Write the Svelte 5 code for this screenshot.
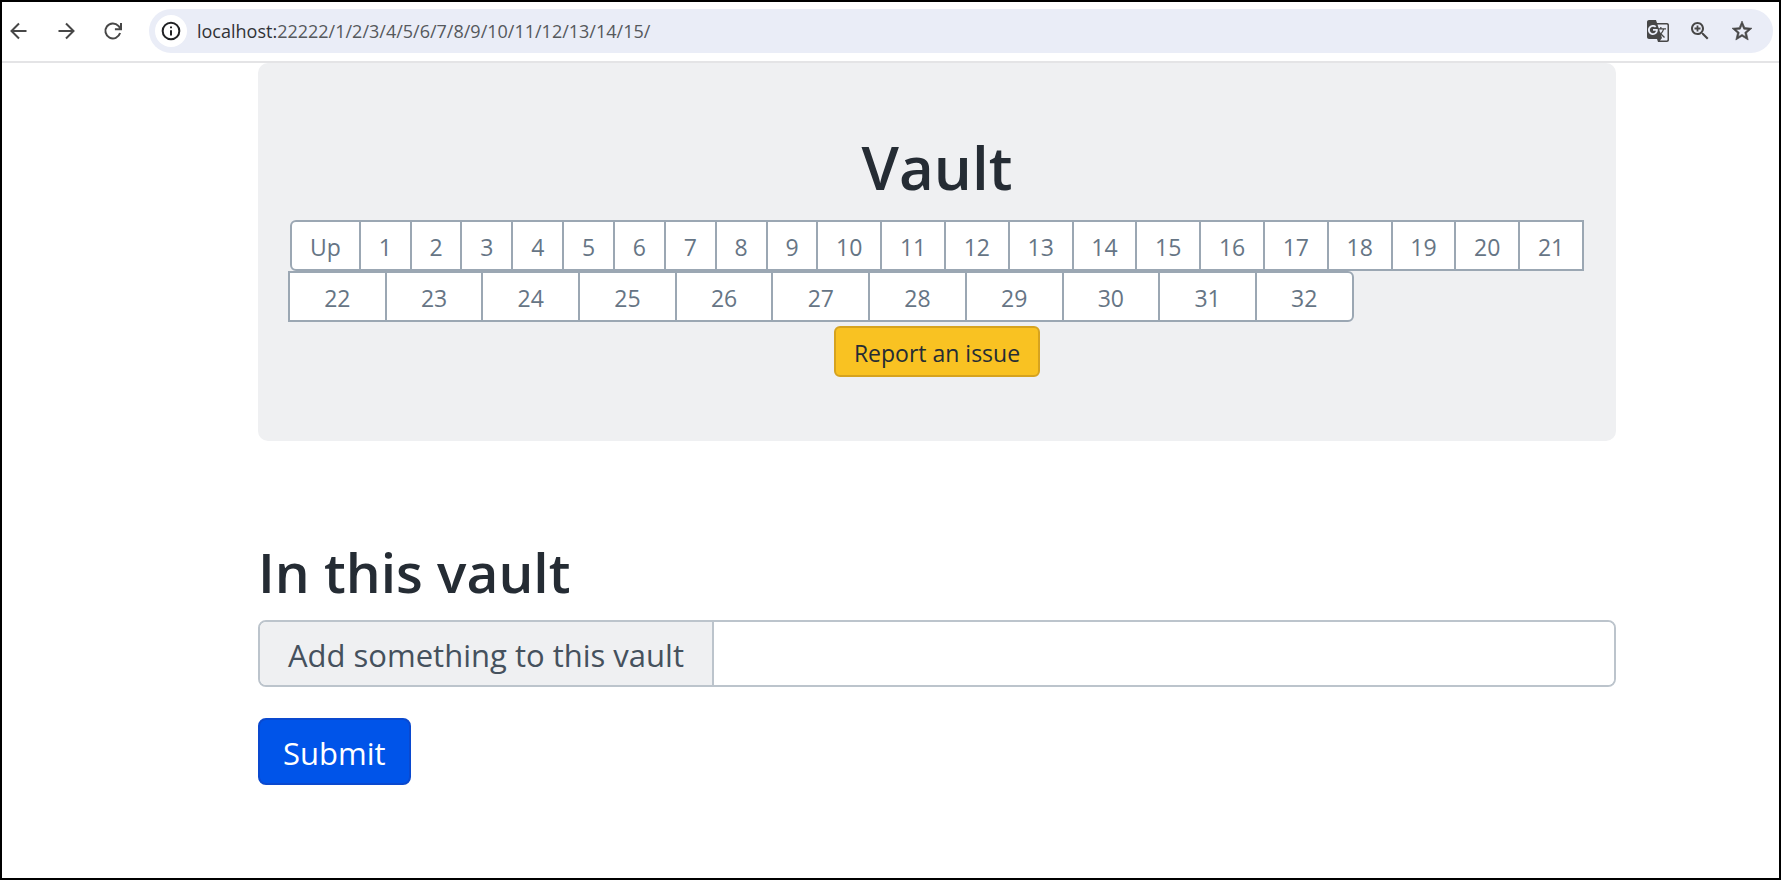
<script>
  const firstRow = Array.from({ length: 21 }, (_, i) => i + 1);
  const secondRow = Array.from({ length: 11 }, (_, i) => i + 22);
  let item = $state('');
</script>

<div class="window">
  <header class="toolbar">
    <nav class="history" aria-label="History">
      <button aria-label="Back"><svg viewBox="0 0 24 24"><path d="M21 12H4.500M12 3l-9 9 9 9" /></svg></button>
      <button aria-label="Forward"><svg viewBox="0 0 24 24"><path d="M3 12h16.500M12 3l9 9-9 9" /></svg></button>
      <button aria-label="Reload"><svg viewBox="0 0 24 24"><path d="M20.500 14.500A9 9 0 1 1 18.500 5.800L21 9M21.600 2.500v7.300h-7.300" /></svg></button>
    </nav>
    <div class="address">
      <button class="info" aria-label="Site information">
        <svg viewBox="0 0 24 24"><circle cx="12" cy="12" r="10" /><path d="M12 11v6.500M12 6.500v2.300" /></svg>
      </button>
      <span class="url"><b>localhost:</b>22222/1/2/3/4/5/6/7/8/9/10/11/12/13/14/15/</span>
      <div class="actions">
        <button aria-label="Translate this page">
          <svg viewBox="0 0 24 24"><path d="M21 4H11l-1-3H3c-1.100 0-2 .9-2 2v15c0 1.100.9 2 2 2h8l1 3h9c1.100 0 2-.9 2-2V6c0-1.100-.9-2-2-2zM7 16c-2.760 0-5-2.240-5-5s2.240-5 5-5c1.350 0 2.480.5 3.350 1.300L9.030 8.570c-.38-.36-1.040-.78-2.030-.78-1.740 0-3.150 1.440-3.150 3.210S5.260 14.210 7 14.210c2.010 0 2.840-1.440 2.920-2.410H7v-1.710h4.680c.07.31.12.61.12 1.020C11.800 13.970 9.890 16 7 16zm6.170-5.420h3.700c-.43 1.250-1.110 2.430-2.050 3.470-.31-.35-.6-.72-.86-1.100l-.79-2.370zm8.330 9.920c0 .55-.45 1-1 1H14l2-2.500-1.040-3.100 3.100 3.100.92-.92-3.300-3.250.02-.02c1.130-1.250 1.930-2.690 2.400-4.220H20v-1.300h-4.530V8h-1.290v1.290h-1.440L11.460 5.500h9.040c.55 0 1 .45 1 1v14z" /></svg>
        </button>
        <button aria-label="Zoom">
          <svg viewBox="0 0 24 24"><path d="M15.500 14h-.79l-.28-.27C15.410 12.590 16 11.110 16 9.500 16 5.910 13.090 3 9.500 3S3 5.910 3 9.500 5.910 16 9.500 16c1.610 0 3.090-.59 4.230-1.570l.27.28v.79l5 4.990L20.490 19l-4.990-5zm-6 0C7.010 14 5 11.990 5 9.500S7.010 5 9.500 5 14 7.010 14 9.500 11.990 14 9.500 14zM12.500 10.400h-2.100v2.100H8.600v-2.100H6.500V8.600h2.100V6.500h1.800v2.100h2.100z" /></svg>
        </button>
        <button aria-label="Bookmark this page">
          <svg class="star" viewBox="0 0 24 24"><path d="M22 9.240l-7.190-.62L12 2 9.190 8.630 2 9.240l5.460 4.730L5.820 21 12 17.270 18.180 21l-1.630-7.030L22 9.240zM12 15.400l-3.760 2.270 1-4.280-3.320-2.880 4.380-.38L12 6.100l1.710 4.040 4.380.38-3.320 2.880 1 4.280L12 15.400z" /></svg>
        </button>
      </div>
    </div>
  </header>

  <main>
    <section class="hero">
      <h1>Vault</h1>
      <nav class="vaults" aria-label="Vaults">
        <div class="row first">
          <a class="up" href="#up">Up</a>
          {#each firstRow as n}
            <a class:wide={n > 9} href="#vault-{n}">{n}</a>
          {/each}
        </div>
        <div class="row second">
          {#each secondRow as n}
            <a href="#vault-{n}">{n}</a>
          {/each}
        </div>
      </nav>
      <button class="report">Report an issue</button>
    </section>

    <h2>In this vault</h2>
    <form onsubmit={(e) => e.preventDefault()}>
      <div class="group">
        <label for="item">Add something to this vault</label>
        <input id="item" type="text" bind:value={item} />
      </div>
      <button class="submit" type="submit">Submit</button>
    </form>
  </main>
</div>

<style>
  :global(body) {
    margin: 0;
    background: #fff;
  }

  .window {
    box-sizing: border-box;
    min-height: 100vh;
    border: 2px solid #000;
    font-family: "Open Sans", "Noto Sans", sans-serif;
    font-weight: 400;
    color: #252c34;
  }

  button {
    font: inherit;
    cursor: pointer;
  }

  .toolbar {
    display: flex;
    align-items: center;
    gap: 26px;
    padding: 7px 6px 8px 7px;
    border-bottom: 2px solid #e4e4e6;
  }

  .toolbar button {
    display: flex;
    flex: none;
    padding: 0;
    border: 0;
    background: none;
  }

  .toolbar svg {
    width: 20px;
    height: 20px;
    fill: none;
    stroke: #474747;
    stroke-width: 2.400;
  }

  .history {
    display: flex;
    gap: 27px;
  }

  .address {
    display: flex;
    flex: 1;
    align-items: center;
    gap: 10px;
    height: 44px;
    padding: 0 19px 0 6px;
    border-radius: 22px;
    background: #eaedf7;
  }

  .toolbar .info {
    padding: 6px;
    border-radius: 50%;
    background: #fff;
  }

  .info svg {
    stroke: #202124;
  }

  .actions {
    display: flex;
    gap: 18px;
  }

  .actions svg {
    width: 24px;
    height: 24px;
    fill: #474747;
    stroke: none;
  }

  .actions .star {
    stroke: #474747;
    stroke-width: 0.600;
  }

  .url {
    flex: 1;
    font-size: 18px;
    line-height: 24px;
    color: #55585c;
  }

  .url b {
    font-weight: 400;
    color: #303236;
  }

  main {
    padding: 0 163px 0 256px;
  }

  .hero {
    display: flex;
    flex-direction: column;
    align-items: center;
    padding: 66px 32px 64px;
    border-radius: 10px;
    background: #eff0f2;
  }

  h1,
  h2 {
    margin: 0;
    font-weight: 600;
  }

  h1 {
    margin-bottom: 14px;
    font-size: 60px;
    line-height: 77px;
  }

  h2 {
    margin: 98px 0 15px;
    font-size: 55px;
    line-height: 66px;
  }

  .vaults {
    align-self: stretch;
    margin-bottom: 4px;
  }

  .row {
    display: flex;
  }

  .row a {
    box-sizing: border-box;
    flex: 49 1 0;
    margin-left: -2px;
    padding-top: 3px;
    border: 2px solid #9ba7b3;
    background: #fff;
    font-size: 23px;
    line-height: 44px;
    text-align: center;
    text-decoration: none;
    color: #667585;
  }

  .row a.wide {
    flex-grow: 62;
  }

  .row a.up {
    flex-grow: 67;
    margin-left: 0;
    border-radius: 6px 0 0 6px;
  }

  .row.second a {
    flex-grow: 97;
  }

  .second a:last-child {
    border-radius: 0 6px 6px 0;
  }

  .second::after {
    content: "";
    flex: 236 1 0;
  }

  .report {
    padding: 3px 18px 0;
    border: 2px solid #d6a31f;
    border-radius: 6px;
    background: #f9c222;
    font-size: 23px;
    line-height: 44px;
    color: #252c34;
  }

  form {
    display: flex;
    flex-direction: column;
    align-items: flex-start;
    gap: 31px;
    font-size: 31px;
    line-height: 60px;
  }

  .group {
    display: flex;
    align-self: stretch;
    border: 2px solid #bcc4cc;
    border-radius: 8px;
    overflow: hidden;
  }

  label {
    padding: 3px 28px 0;
    border-right: 2px solid #bcc4cc;
    background: #eff0f2;
    color: #45515d;
  }

  input {
    flex: 1;
    min-width: 0;
    padding: 0 24px;
    border: 0;
    outline: 0;
    font: inherit;
    color: inherit;
  }

  .submit {
    padding: 3px 23px 0;
    border: 2px solid #0a49cf;
    border-radius: 8px;
    background: #0054e9;
    color: #fff;
  }
</style>
